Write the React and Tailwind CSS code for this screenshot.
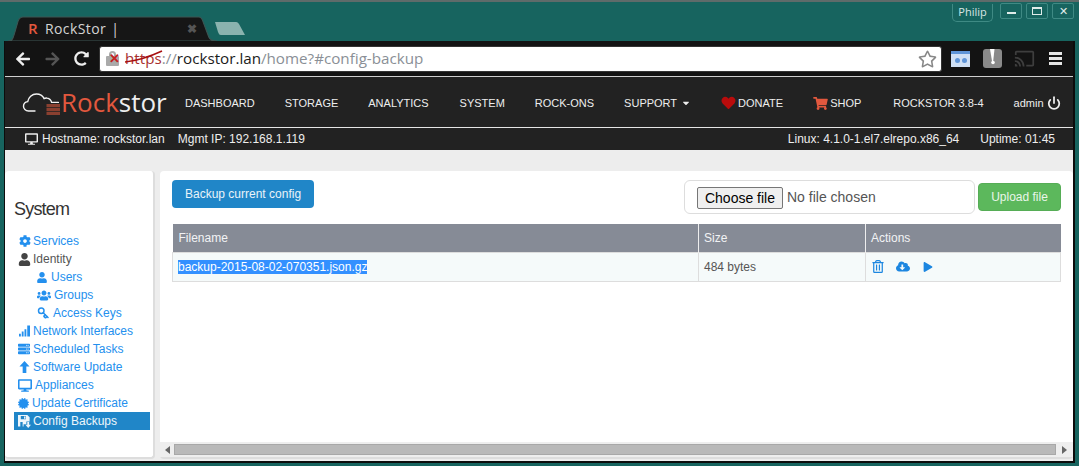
import {
  FaArrowLeft,
  FaArrowRight,
  FaRedoAlt,
  FaRegStar,
  FaDesktop,
  FaHeart,
  FaShoppingCart,
  FaCaretDown,
  FaCog,
  FaUser,
  FaUsers,
  FaServer,
  FaCertificate,
  FaRegTrashAlt,
  FaCloudDownloadAlt,
  FaPlay,
} from "react-icons/fa";
import { MdCast } from "react-icons/md";
import { Power, Key } from "lucide-react";

const sans = "font-['Liberation_Sans',Arial,sans-serif]";

const navItems = [
  { label: "DASHBOARD" },
  { label: "STORAGE" },
  { label: "ANALYTICS", extra: "mr-[1px]" },
  { label: "SYSTEM" },
  { label: "ROCK-ONS" },
  { label: "SUPPORT", caret: true },
  { label: "DONATE", icon: FaHeart, iconClass: "text-[#b80c0c] w-[15px] h-[14px]" },
  { label: "SHOP", icon: FaShoppingCart, iconClass: "text-[#e2583e] w-[15px] h-[13px]", extra: "mr-[2px]" },
  { label: "ROCKSTOR 3.8-4" },
];

const SignalIcon = ({ className }) => (
  <svg viewBox="0 0 12 12" className={className} fill="currentColor">
    <path d="M0 9h2v3H0zM3 6.500h2V12H3zM6 4h2v8H6zM9 0h3v12H9z" />
  </svg>
);

const UpIcon = ({ className }) => (
  <svg viewBox="0 0 12 13" className={className} fill="currentColor">
    <path d="M6 0l5.500 6H8v7H4V6H.5z" />
  </svg>
);

const FloppyIcon = ({ className }) => (
  <svg viewBox="0 0 14 14" className={className} fill="currentColor">
    <path fillRule="evenodd" d="M0 0h10l2.500 2.500V7H9v3H6v2.500H0zM3 1v3.500h5.500V1zM6.500 1.500H8v2.500H6.500zM2.500 7.500v5h2.500v-5z" />
    <path d="M10 7.500h2v3h2L11 14l-3-3.500h2z" />
  </svg>
);

const sideItems = [
  { label: "Services", icon: FaCog, iconBox: "w-[15px]", size: "w-[12px] h-[12px] ml-[1px]" },
  { label: "Identity", icon: FaUser, iconBox: "w-[15px]", size: "w-[13px] h-[13px]", plain: true },
  { label: "Users", icon: FaUser, iconBox: "w-[14px]", size: "w-[10px] h-[11px]", sub: true },
  { label: "Groups", icon: FaUsers, iconBox: "w-[17px]", size: "w-[14px] h-[13px]", sub: true },
  { label: "Access Keys", icon: Key, iconBox: "w-[16px]", size: "w-[12px] h-[12px] rotate-90", stroke: 3, sub: true },
  { label: "Network Interfaces", icon: SignalIcon, iconBox: "w-[15px]", size: "w-[11px] h-[12px] ml-[1px]" },
  { label: "Scheduled Tasks", icon: FaServer, iconBox: "w-[15px]", size: "w-[12px] h-[12px]" },
  { label: "Software Update", icon: UpIcon, iconBox: "w-[15px]", size: "w-[11px] h-[12px] ml-[1px]" },
  { label: "Appliances", icon: FaDesktop, iconBox: "w-[17px]", size: "w-[14px] h-[13px]" },
  { label: "Update Certificate", icon: FaCertificate, iconBox: "w-[14px]", size: "w-[11px] h-[11px]" },
  { label: "Config Backups", icon: FloppyIcon, iconBox: "w-[15px]", size: "w-[13px] h-[13px]", active: true },
];

const RockstorLogo = () => (
  <svg viewBox="0 0 40 24" className="w-[40px] h-[24px] shrink-0">
    <path
      d="M13 20H6.500C3.500 20 1.500 17.800 1.500 15.300c0-2.400 1.800-4.400 4.200-4.700C6.500 6.500 9.800 3 14.500 3c3.400 0 6.200 1.800 7.600 4.600 1-.5 2-.7 3-.5 2.300.3 4 2.100 4.500 4.300h6.800"
      fill="none"
      stroke="#f2f2f2"
      strokeWidth="1.400"
      strokeLinecap="round"
    />
    <path d="M24.500 13h13.500v3.200H24.500zM24.500 17h13.500v3.200H24.500zM24.500 21h13.500v3H24.500z" fill="#8a4030" />
  </svg>
);

const WindowButton = ({ children }) => (
  <div className="w-[22px] h-[16px] border border-[#3f8a84] rounded-[2px] flex items-center justify-center text-[#e0ecea]">
    {children}
  </div>
);

const App = () => {
  return (
    <div className={`${sans} w-[1079px] h-[466px] overflow-hidden bg-[#17645f] border-t-2 border-[#5f6b6a] pl-[4px] pr-[4px] pb-[3px] flex flex-col`}>
      {/* Tab strip */}
      <div className="h-[39px] flex justify-between shrink-0">
        <div className="flex items-end pl-[4px]">
          <div className="relative w-[209px] h-[25px]">
            <svg viewBox="0 0 207 24" preserveAspectRatio="none" className="absolute inset-0 w-full h-full">
              <path d="M0 24c5 0 5-3 7-9l3-10c1-3 2-4 5-4h174c2 0 3 1 4 4l5 13c1 4 3 6 9 6z" fill="#161616" stroke="#3d5553" />
            </svg>
            <div className="relative flex items-center h-full pl-[20px] pr-[20px] font-['Open_Sans',sans-serif] text-[14px]">
              <span className="font-semibold text-[#e2583e] text-[15px] w-[17px]">R</span>
              <span className="text-[#d4d4d4] tracking-[0.4px]">RockStor</span>
              <span className="text-[#d4d4d4] ml-[5px]">|</span>
              <span className="ml-auto text-[#555] text-[12px] font-bold">✖</span>
            </div>
          </div>
          <svg viewBox="0 0 32 15" className="w-[32px] h-[15px] mb-[5px] ml-[-3px]">
            <path d="M1 1h21c2 0 2 1 3 2l6 11H7C5 14 5 13 4 11z" fill="#8ab3ae" />
          </svg>
        </div>
        <div className="flex items-start gap-[4px] mr-[1px] pt-[1px]">
          <div className="w-[41px] h-[18px] border border-t-0 border-[#3f8a84] rounded-b-[5px] flex items-center justify-center text-[11px] text-[#d9e6e4] font-['Open_Sans',sans-serif] mr-[3px] mt-[1px]">
            Philip
          </div>
          <WindowButton>
            <div className="w-[9px] h-[2px] bg-[#e0ecea] mt-[4px]" />
          </WindowButton>
          <WindowButton>
            <div className="w-[10px] h-[8px] border border-t-2 border-[#e0ecea]" />
          </WindowButton>
          <WindowButton>
            <span className="text-[11px] leading-none">✕</span>
          </WindowButton>
        </div>
      </div>

      {/* Browser body */}
      <div className="flex-1 min-h-0 border-l border-r-2 border-b-2 border-[#0c0c0c] flex flex-col bg-[#ededed]">
        {/* Toolbar */}
        <div className="h-[36px] shrink-0 bg-[#131313] border-b border-[#cfcfcf] flex items-center pl-[10px] pr-[10px]">
          <FaArrowLeft className="w-[16px] h-[16px] text-[#eee]" />
          <FaArrowRight className="w-[17px] h-[16px] text-[#555] ml-[13px]" />
          <FaRedoAlt className="w-[15px] h-[15px] text-[#eee] ml-[13px]" />
          <div className="ml-[10px] w-[843px] h-[26px] bg-white border border-[#333] rounded-[3px] flex items-center pl-[6px] pr-[4px] font-['Open_Sans',sans-serif] text-[15.2px]">
            <div className="relative w-[14px] h-[15px] shrink-0">
              <div className="absolute left-0 bottom-0 w-[13px] h-[10px] bg-[#aaa] rounded-[1px]" />
              <div className="absolute left-[3px] top-0 w-[7px] h-[7px] border-2 border-[#aaa] rounded-t-full" />
              <span className="absolute left-[3px] top-[1px] text-[#c62020] text-[13px] leading-none font-bold">✕</span>
            </div>
            <div className="relative ml-[5px] text-[#a83030]">
              https
              <svg viewBox="0 0 38 14" className="absolute left-0 top-[3px] w-[38px] h-[14px]">
                <path d="M0 12c10-1 24-5 37-11" fill="none" stroke="#a81010" strokeWidth="1.500" />
              </svg>
            </div>
            <span className="text-[#8a8f96]">://</span>
            <span className="text-[#1b1b1b]">rockstor.lan</span>
            <span className="text-[#8a8f96]">/home?#config-backup</span>
            <FaRegStar className="ml-auto w-[19px] h-[18px] text-[#888]" />
          </div>
          <div className="ml-[9px] w-[19px] h-[16px] bg-[#cfe0f5] border-t-[3px] border-[#5f95d8] flex items-center justify-center gap-[2px] shrink-0">
            <div className="w-[5px] h-[5px] rounded-full bg-[#5f95d8]" />
            <div className="w-[5px] h-[5px] rounded-full bg-[#5f95d8]" />
          </div>
          <svg viewBox="0 0 19 19" className="ml-[13px] w-[19px] h-[19px] shrink-0">
            <rect width="19" height="19" rx="3" fill="#8a8a8a" />
            <path d="M7 0h4.500l-1.300 12H9z" fill="#fff" />
            <circle cx="10" cy="13.500" r="1.800" fill="#fff" />
          </svg>
          <MdCast className="ml-[12px] w-[21px] h-[21px] text-[#3e3e3e] shrink-0" />
          <div className="ml-[14px] w-[13px] flex flex-col gap-[2px] shrink-0">
            <div className="h-[3px] bg-[#e5e5e5]" />
            <div className="h-[3px] bg-[#e5e5e5]" />
            <div className="h-[3px] bg-[#e5e5e5]" />
          </div>
        </div>

        {/* Nav */}
        <div className="h-[51px] shrink-0 bg-[#222] border-b border-[#e5e5e5] flex items-center pl-[17px] pt-[2px] text-[11px] text-[#eee]">
          <RockstorLogo />
          <div className="font-['Open_Sans',sans-serif] font-medium text-[26px] leading-none w-[124px] -ml-[1px] -mt-[2px]">
            <span className="text-[#e2583e]">Rock</span>
            <span className="text-[#eee]">stor</span>
          </div>
          <div className="flex items-center gap-[30px]">
            {navItems.map((item) => (
              <div key={item.label} className={`flex items-center gap-[2px] whitespace-nowrap ${item.extra || ""}`}>
                {item.icon && <item.icon className={item.iconClass} />}
                <span>{item.label}</span>
                {item.caret && <FaCaretDown className="w-[10px] h-[10px] ml-[2px]" />}
              </div>
            ))}
            <div className="flex items-center gap-[3px]">
              <span>admin</span>
              <Power className="w-[14px] h-[14px]" strokeWidth={3} />
            </div>
          </div>
        </div>

        {/* Info bar */}
        <div className="h-[22px] shrink-0 bg-[#222] flex items-center justify-between pl-[20px] pr-[18px] text-[12px] text-[#eee]">
          <div className="flex items-center">
            <FaDesktop className="w-[13px] h-[12px] mr-[4px]" />
            <span>Hostname: rockstor.lan</span>
            <span className="ml-[13px]">Mgmt IP: 192.168.1.119</span>
          </div>
          <div className="flex items-center gap-[21px]">
            <span>Linux: 4.1.0-1.el7.elrepo.x86_64</span>
            <span>Uptime: 01:45</span>
          </div>
        </div>

        {/* Page */}
        <div className="flex-1 min-h-0 pt-[21px] pb-[2px] flex gap-[5px] text-[12px]">
          {/* Sidebar */}
          <aside className="w-[150px] shrink-0 bg-white border-r-2 border-b-2 border-[#ddd] rounded-[4px] pt-[28px] pl-[9px] pr-[3px]">
            <h2 className="text-[18px] leading-[20px] text-[#333] tracking-[-0.8px] mb-[13px]">System</h2>
            <ul>
              {sideItems.map((item) => (
                <li
                  key={item.label}
                  className={`h-[18px] flex items-center ${
                    item.active ? "bg-[#2086c8] text-[#eef6fb] pl-[4px]" : item.plain ? "text-[#555] pl-[4px]" : "text-[#2490ee] pl-[4px]"
                  } ${item.sub ? "pl-[23px]" : ""}`}
                >
                  <span className={`${item.iconBox} shrink-0 flex items-center ${item.plain ? "text-[#444]" : ""}`}>
                    <item.icon className={item.size} strokeWidth={item.stroke} />
                  </span>
                  <span>{item.label}</span>
                </li>
              ))}
            </ul>
          </aside>

          {/* Main */}
          <main className="flex-1 min-w-0 bg-white border-b-2 border-[#ddd] rounded-[4px] flex flex-col">
            <div className="flex-1 pt-[9px] pl-[12px] pr-[12px]">
              <div className="flex items-start justify-between h-[44px]">
                <button className="h-[28px] px-[13px] rounded-[4px] bg-[#2086c8] text-[#e9f3f9]">Backup current config</button>
                <div className="flex items-start">
                  <div className="w-[291px] h-[34px] border border-[#ddd] rounded-[6px] flex items-center pl-[12px] pt-[1px] text-[14px] text-[#555]">
                    <button className="w-[86px] h-[22px] bg-[#efefef] border border-[#767676] rounded-[2px] text-black">Choose file</button>
                    <span className="ml-[4px]">No file chosen</span>
                  </div>
                  <button className="ml-[3px] mt-[3px] w-[83px] h-[28px] rounded-[4px] bg-[#5cb85c] border border-[#56ad56] text-[#e9f6e9]">Upload file</button>
                </div>
              </div>
              <table className="w-[889px] table-fixed border-collapse">
                <thead>
                  <tr className="h-[28px] bg-[#868b96] text-[#f2f3f5]">
                    <th className="w-[526px] font-normal text-left pl-[6px] border-r border-[#eee]">Filename</th>
                    <th className="w-[167px] font-normal text-left pl-[5px] border-r border-[#eee]">Size</th>
                    <th className="font-normal text-left pl-[5px]">Actions</th>
                  </tr>
                </thead>
                <tbody>
                  <tr className="h-[29px] bg-[#f5fafa] text-[#555] border border-[#ddd]">
                    <td className="pl-[5px] border-r border-[#ddd]">
                      <span className="bg-[#3390ff] text-white">backup-2015-08-02-070351.json.gz</span>
                    </td>
                    <td className="pl-[5px] border-r border-[#ddd]">484 bytes</td>
                    <td className="pl-[6px]">
                      <div className="flex items-center text-[#1c86e0]">
                        <FaRegTrashAlt className="w-[12px] h-[13px]" />
                        <FaCloudDownloadAlt className="w-[14px] h-[13px] ml-[12px]" />
                        <FaPlay className="w-[10px] h-[10px] ml-[13px]" />
                      </div>
                    </td>
                  </tr>
                </tbody>
              </table>
            </div>
            {/* Scrollbar */}
            <div className="h-[15px] shrink-0 bg-[#eee] flex items-center px-[4px]">
              <div className="w-0 h-0 border-y-[4px] border-y-transparent border-r-[5px] border-r-[#666] ml-[1px]" />
              <div className="ml-[4px] w-[882px] h-[11px] bg-[#b9b9b9] border border-[#a8a8a8]" />
              <div className="ml-auto mr-[2px] w-0 h-0 border-y-[4px] border-y-transparent border-l-[5px] border-l-[#666]" />
            </div>
          </main>
        </div>
      </div>
    </div>
  );
};

export default App;
